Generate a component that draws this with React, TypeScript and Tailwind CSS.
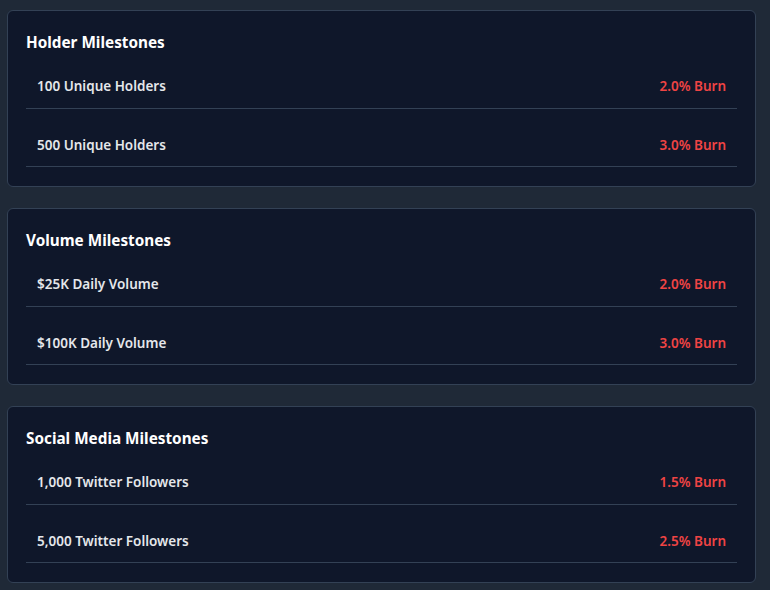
import React from "react";

type Row = { label: string; burn: string };
const sections: { title: string; rows: Row[] }[] = [
  {
    title: "Holder Milestones",
    rows: [
      { label: "100 Unique Holders", burn: "2.0% Burn" },
      { label: "500 Unique Holders", burn: "3.0% Burn" },
    ],
  },
  {
    title: "Volume Milestones",
    rows: [
      { label: "$25K Daily Volume", burn: "2.0% Burn" },
      { label: "$100K Daily Volume", burn: "3.0% Burn" },
    ],
  },
  {
    title: "Social Media Milestones",
    rows: [
      { label: "1,000 Twitter Followers", burn: "1.5% Burn" },
      { label: "5,000 Twitter Followers", burn: "2.5% Burn" },
    ],
  },
];

export default function App() {
  return (
    <div
      className="min-h-[590px] w-[770px] bg-[#1f2937] pl-[7px] pr-[14px] pt-[10px] pb-[8px] flex flex-col gap-[21px]"
      style={{ fontFamily: '"Noto Sans", "Open Sans", sans-serif' }}
    >
      {sections.map((s) => (
        <div
          key={s.title}
          className="bg-[#0f172a] border border-[#334155] rounded-[6px] pt-[19px] pb-[19px] px-[18px]"
        >
          <h2 className="text-[15.3px] leading-[24px] font-bold text-white mb-[10px]">{s.title}</h2>
          <div className="flex flex-col gap-[13px]">
            {s.rows.map((r, i) => (
              <div
                key={r.label}
                className={`flex items-center justify-between px-[11px] ${i === 0 ? "py-[12px]" : "pt-[13px] pb-[11px]"} border-b border-[#334155]`}
              >
                <span className="text-[13.5px] leading-[20px] font-semibold text-[#e5e7eb]">{r.label}</span>
                <span className="text-[13.5px] leading-[20px] font-semibold text-[#ef4444]">{r.burn}</span>
              </div>
            ))}
          </div>
        </div>
      ))}
    </div>
  );
}
